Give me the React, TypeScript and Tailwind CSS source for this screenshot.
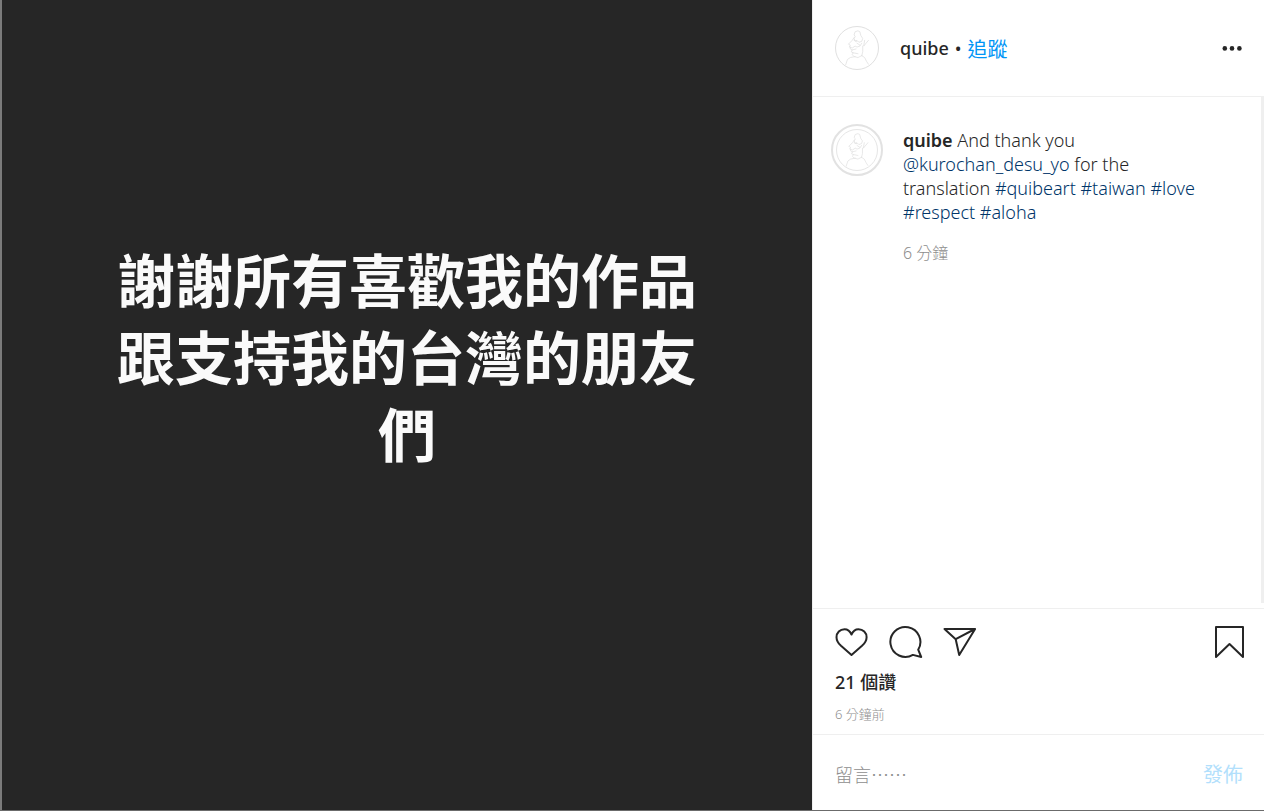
import React, { useState } from 'react';

const MESSAGE_LINES = ['謝謝所有喜歡我的作品', '跟支持我的台灣的朋友', '們'];

const HashLink: React.FC<{ href: string; children: React.ReactNode }> = ({ href, children }) => (
    <a href={href} className="inline-block text-[#003569]">{children}</a>
);

// Thin pencil portrait used as the profile picture
const Portrait: React.FC = () => (
    <svg viewBox="0 0 44 44" className="w-full h-full" fill="none" stroke="#e0e0e0" strokeWidth="0.8" strokeLinecap="round" strokeLinejoin="round">
        <path d="M19 8l1-3 3-1 2 1 1 4 2 3-1 3-3 1-2-2-2 1-1-3 1-2z" />
        <path d="M19 11l-2 3-4 4 2 1-1 2 3 1 3-2 2 1 3-1 2-3M15 21v2l2 1-1 2 2 1-1 2 2 2 4 1 4-2" />
        <path d="M28 20v6l-1 4M34 14l-5 6 1-6M18 27l5 1M17 24l4-1M22 17l3 2M19 14l3 1" />
        <path d="M10 40l2-6 3-2 5-1M27 30l3 2 2 4 2 3" />
    </svg>
);

const Header: React.FC<{ following: boolean; onFollow: () => void }> = ({ following, onFollow }) => (
    <header className="flex items-center h-[97px] pl-[22px] pr-[20px] border-b border-[#efefef]">
        <a href="#quibe" aria-label="quibe" className="block w-11 h-11 rounded-full border border-[#e0e0e0] overflow-hidden">
            <Portrait />
        </a>
        <div className="flex items-center gap-[6px] ml-[21px] text-lg leading-6">
            <a href="#quibe" className="font-medium">quibe</a>
            <span>•</span>
            <button type="button" aria-pressed={following} onClick={onFollow} className="pt-1 text-xl leading-6 text-[#0095f6]">
                追蹤
            </button>
        </div>
        <button type="button" aria-label="更多選項" className="ml-auto">
            <svg viewBox="0 0 24 24" className="w-6 h-6" fill="#262626">
                <circle cx="4.8" cy="12.4" r="2.3" />
                <circle cx="12" cy="12.4" r="2.3" />
                <circle cx="19.4" cy="12.4" r="2.3" />
            </svg>
        </button>
    </header>
);

const Caption: React.FC = () => (
    <div className="flex flex-1 items-start border-r-3 border-[#efefef] pl-[18px] pt-[27px] mb-[5px]">
        <a href="#quibe" aria-label="quibe" className="block shrink-0 w-[52px] h-[52px] p-[3px] rounded-full border-2 border-[#e2e2e2]">
            <span className="block w-full h-full rounded-full border border-[#e6e6e6] overflow-hidden">
                <Portrait />
            </span>
        </a>
        <div className="ml-[20px] pt-1">
            <p className="max-w-[310px] text-lg leading-6 font-light">
                <a href="#quibe" className="inline-block font-semibold">quibe</a> And thank you{' '}
                <HashLink href="#kurochan">@kurochan_desu_yo</HashLink> for the translation{' '}
                <HashLink href="#quibeart">#quibeart</HashLink> <HashLink href="#taiwan">#taiwan</HashLink>{' '}
                <HashLink href="#love">#love</HashLink> <HashLink href="#respect">#respect</HashLink>{' '}
                <HashLink href="#aloha">#aloha</HashLink>
            </p>
            <time className="block mt-[17px] text-base leading-6 font-light text-[#8e8e8e]">6 分鐘</time>
        </div>
    </div>
);

const Actions: React.FC = () => (
    <section className="h-[126px] pl-[22px] pr-[17px] pt-4 border-t border-[#efefef]">
        <div className="flex gap-5">
            <button type="button" aria-label="讚">
                <svg viewBox="0 0 34 34" className="w-[34px] h-[34px]" fill="none" stroke="#262626" strokeWidth="2" strokeLinejoin="round">
                    <path d="M16.5 9.5C15 6 12.5 4.2 9.5 4.2 5 4.2 1.5 7.7 1.5 12.2c0 3.5 1.7 6 4.5 8.6L16.5 30 27 20.8c2.8-2.6 4.6-5.1 4.6-8.6 0-4.5-3.6-8-8.1-8-3 0-5.5 1.8-7 5.3z" />
                </svg>
            </button>
            <button type="button" aria-label="回應">
                <svg viewBox="0 0 34 34" className="w-[34px] h-[34px]" fill="none" stroke="#262626" strokeWidth="2" strokeLinejoin="round">
                    <path d="M29.2 24.7a15 15 0 1 0-5.3 5.2l8.3 2.1z" />
                </svg>
            </button>
            <button type="button" aria-label="分享">
                <svg viewBox="0 0 34 34" className="w-[34px] h-[34px]" fill="none" stroke="#262626" strokeWidth="2" strokeLinejoin="round">
                    <path d="M1.5 4h30.6L16.2 30 12.7 14.2zM12.7 14.2L32 4" />
                </svg>
            </button>
            <button type="button" aria-label="儲存" className="ml-auto">
                <svg viewBox="0 0 34 34" className="w-[34px] h-[34px]" fill="none" stroke="#262626" strokeWidth="2" strokeLinejoin="round">
                    <path d="M3 2h27v30L16.5 19 3 32z" />
                </svg>
            </button>
        </div>
        <p className="mt-[11px] text-lg leading-6 font-medium">21 個讚</p>
        <time className="block mt-2 text-[13px] leading-6 font-light text-[#8e8e8e]">6 分鐘前</time>
    </section>
);

const CommentForm: React.FC = () => {
    const [text, setText] = useState('');

    return (
        <form onSubmit={(e) => e.preventDefault()} className="flex items-center h-[76px] pl-[22px] pr-[21px] pt-1 border-t border-[#efefef]">
            <input
                type="text"
                aria-label="留言"
                placeholder="留言⋯⋯"
                value={text}
                onChange={(e) => setText(e.target.value)}
                className="flex-1 min-w-0 text-lg font-light outline-none placeholder:text-[#8e8e8e]"
            />
            <button type="submit" className="text-xl leading-6 text-[#b2dffc]">發佈</button>
        </form>
    );
};

export default function App() {
    const [following, setFollowing] = useState(false);

    return (
        <div className="flex min-h-screen bg-white text-[#262626] border-b border-[#6b6b6b] font-['Noto_Sans','Noto_Sans_CJK_TC',sans-serif]">
            {/* Post */}
            <main className="flex flex-1 items-center justify-center bg-[#262626] border-l-2 border-[#7b7b7b]">
                <p className="pb-[99px] text-center text-[58px] leading-[77px] font-bold text-[#fafafa] font-['Noto_Sans_CJK_TC',sans-serif]">
                    {MESSAGE_LINES.map((line) => (
                        <span key={line} className="block">{line}</span>
                    ))}
                </p>
            </main>

            {/* Sidebar */}
            <aside className="flex flex-col w-[452px] shrink-0 border-l border-[#efefef]">
                <Header following={following} onFollow={() => setFollowing(!following)} />
                <Caption />
                <Actions />
                <CommentForm />
            </aside>
        </div>
    );
}
